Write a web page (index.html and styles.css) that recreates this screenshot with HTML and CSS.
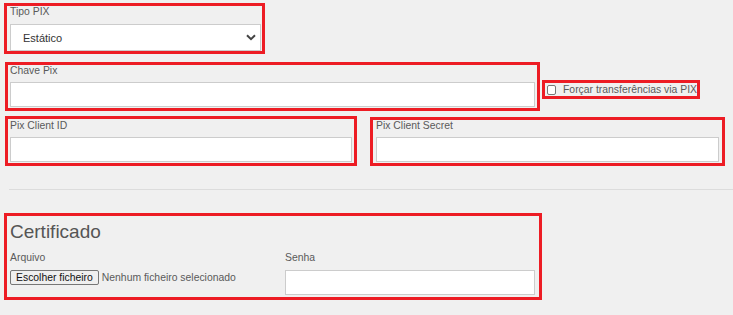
FILE: index.html
```html
<html>
    <head>
        <title>Configuração PIX</title>
        <meta charset="utf-8">
        <link rel="stylesheet" href="styles.css">
    </head>

    <body>
        <div class="page">

            <div class="row">
                <div class="mark grp-tipo">
                    <label class="lbl">Tipo PIX</label>
                    <div class="select-wrap">
                        <select class="select">
                            <option>Estático</option>
                        </select>
                        <svg class="chevron" width="10" height="7" viewBox="0 0 10 7">
                            <path d="M1 1.2 L5 5.2 L9 1.2" fill="none" stroke="#444" stroke-width="2"/>
                        </svg>
                    </div>
                </div>
            </div>

            <div class="row row-chave">
                <div class="mark grp-chave">
                    <label class="lbl">Chave Pix</label>
                    <input type="text" class="field" />
                </div>
                <div class="mark grp-check">
                    <input type="checkbox" class="check" id="forcar" />
                    <label for="forcar" class="check-text">Forçar transferências via PIX</label>
                </div>
            </div>

            <div class="row row-client">
                <div class="mark grp-id">
                    <label class="lbl">Pix Client ID</label>
                    <input type="text" class="field" />
                </div>
                <div class="mark grp-secret">
                    <label class="lbl">Pix Client Secret</label>
                    <input type="text" class="field" />
                </div>
            </div>

            <div class="divider"></div>

            <div class="row row-cert">
                <div class="mark grp-cert">
                    <h3 class="title">Certificado</h3>
                    <div class="cols">
                        <div class="col-file">
                            <label class="lbl">Arquivo</label>
                            <div class="file">
                                <button type="button" class="file-btn">Escolher ficheiro</button>
                                <span class="file-name">Nenhum ficheiro selecionado</span>
                            </div>
                        </div>
                        <div class="col-pass">
                            <label class="lbl">Senha</label>
                            <input type="password" class="field" />
                        </div>
                    </div>
                </div>
            </div>

        </div>
    </body>
</html>
```

FILE: styles.css
```css
body {
    margin: 0;
    background: #f0f0f0;
    font-family: "Liberation Sans", Arial, sans-serif;
    font-size: 10.4px;
    color: #5a5a5a;
}

.page {
    padding-top: 3px;
}

.row {
    display: flex;
    align-items: flex-start;
}

/* red highlight boxes */
.mark {
    box-sizing: border-box;
    border: 3px solid #ed1c24;
}

.lbl {
    display: block;
    line-height: 12px;
    margin-bottom: 5px;
    white-space: nowrap;
}

.field {
    display: block;
    box-sizing: border-box;
    width: 100%;
    height: 25px;
    margin: 0;
    border: 1px solid #cccccc;
    background: #fff;
    outline: none;
}

/* Tipo PIX */
.grp-tipo {
    margin-left: 4px;
    width: 261px;
    height: 51px;
    padding: 0 1px 0 3px;
}

.grp-tipo .lbl {
    margin-bottom: 6px;
}

.select-wrap {
    position: relative;
}

.select {
    display: block;
    box-sizing: border-box;
    width: 100%;
    height: 27px;
    margin: 0;
    padding: 0 0 0 12px;
    border: 1px solid #cccccc;
    border-radius: 0;
    background: #fff;
    -webkit-appearance: none;
    appearance: none;
    font-family: "Liberation Sans", Arial, sans-serif;
    font-size: 11px;
    color: #333;
    outline: none;
}

.chevron {
    position: absolute;
    right: 5px;
    top: 10px;
}

/* Chave Pix */
.row-chave {
    margin-top: 8px;
}

.grp-chave {
    margin-left: 5px;
    width: 535px;
    height: 49px;
    padding: 0 2px 1px 2px;
}

.grp-check {
    margin-left: 2px;
    margin-top: 18px;
    width: 158px;
    height: 19px;
    padding-left: 2px;
    display: flex;
    align-items: center;
}

.check {
    -webkit-appearance: none;
    appearance: none;
    box-sizing: border-box;
    width: 10px;
    height: 10px;
    margin: 1px 7px 0 0;
    border: 1px solid #777;
    border-radius: 2px;
    background: #fff;
}

.check-text {
    white-space: nowrap;
    line-height: 12px;
}

/* Pix client */
.row-client {
    margin-top: 5px;
    align-items: flex-end;
}

.grp-id {
    margin-left: 5px;
    width: 352px;
    height: 50px;
    padding: 1px 2px 1px 2px;
}

.grp-secret {
    margin-left: 13px;
    width: 355px;
    height: 49px;
    padding: 0 3px 1px 3px;
}

.divider {
    margin: 23px 0 0 9px;
    border-top: 1px solid #dcdcdc;
}

/* Certificado */
.row-cert {
    margin-top: 23px;
}

.grp-cert {
    margin-left: 4px;
    width: 538px;
    height: 87px;
    padding: 5px 4px 2px 3px;
}

.title {
    margin: 0 0 9px 0;
    font-size: 19px;
    font-weight: normal;
    line-height: 22px;
    color: #555;
}

.cols {
    display: flex;
}

.cols .lbl {
    margin-bottom: 6px;
}

.col-file {
    width: 275px;
}

.col-pass {
    flex: 1;
}

.file {
    display: flex;
    align-items: center;
    white-space: nowrap;
}

.file-btn {
    box-sizing: border-box;
    height: 15px;
    margin: 0;
    padding: 0 5px;
    border: 1px solid #767676;
    border-radius: 2px;
    background: #efefef;
    font-family: "Liberation Sans", Arial, sans-serif;
    font-size: 10.4px;
    line-height: 13px;
    color: #111;
}

.file-name {
    margin-left: 3px;
}
```
